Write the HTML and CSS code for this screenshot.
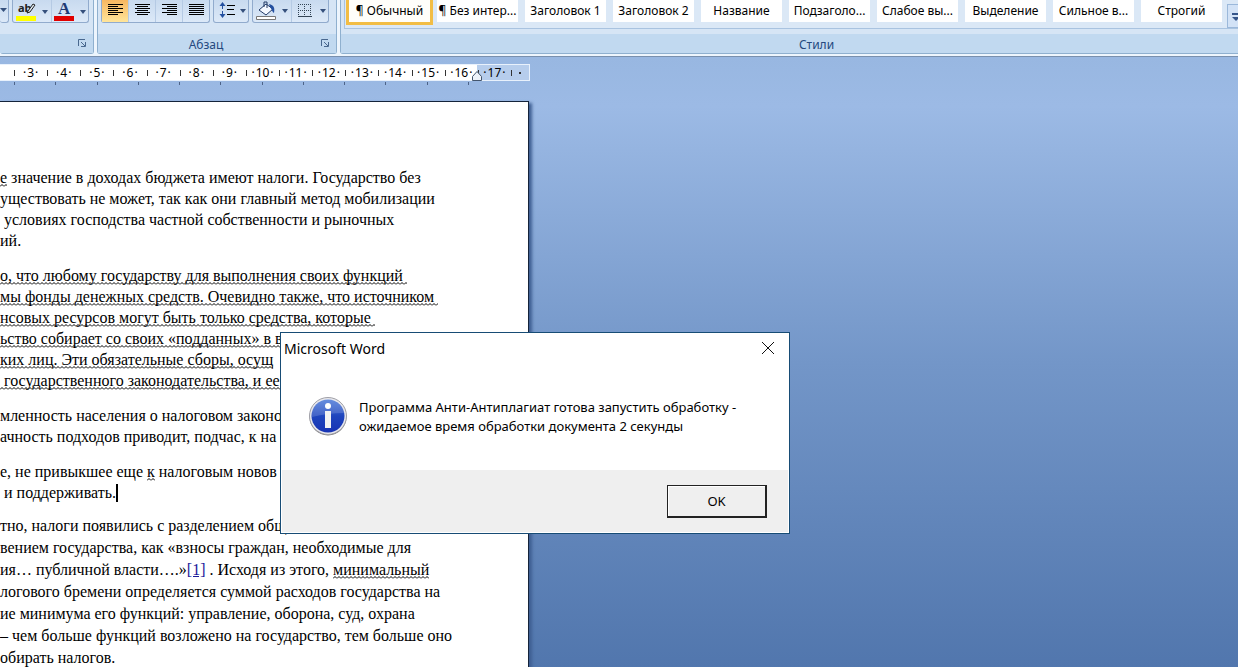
FILE: index.html
```html
<!DOCTYPE html>
<html lang="ru">
<head>
<meta charset="utf-8">
<title>Microsoft Word</title>
<link rel="stylesheet" href="styles.css">
</head>
<body>
<header class="ribbon">
  <section class="group group-font">
    <div class="group-body">
      <div class="tools tools-cut"><button class="tool drop" aria-label="Регистр"><svg width="7" height="4"><path d="M0 0h7L3.5 4z"/></svg></button></div>
      <div class="tools">
        <button class="tool" aria-label="Цвет выделения текста"><svg width="38" height="22" viewBox="0 0 38 22"><text x="5" y="12" class="ico-ab">ab</text><path d="M15 11l5-7 2 1-5 7-3 1z" fill="#dfe8ef" stroke="#222"/><path d="M3 16h20v5H3z" fill="#ff0"/><path class="arrow" d="M29 10h6l-3 4z"/></svg></button>
        <button class="tool" aria-label="Цвет текста"><svg width="36" height="22" viewBox="0 0 36 22"><text x="6" y="14" class="ico-a">A</text><path d="M2 16h20v5H2z" fill="#e00000"/><path class="arrow" d="M28 10h6l-3 4z"/></svg></button>
      </div>
    </div>
    <footer class="group-title"><button class="launcher" aria-label="Шрифт"><svg width="10" height="10"><path d="M1.500 8V1.500H8M4 4l4 4M8.500 4v4.500H4" fill="none" stroke="#49688f"/></svg></button></footer>
  </section>
  <section class="group group-par">
    <div class="group-body">
      <div class="tools">
        <button class="tool on" aria-label="По левому краю"><svg width="26" height="22"><path d="M6 4.500h15M6 6.500h10M6 8.500h15M6 10.500h10M6 12.500h15M6 14.500h10"/></svg></button>
        <button class="tool" aria-label="По центру"><svg width="26" height="22"><path d="M6 4.500h15M8 6.500h11M6 8.500h15M8 10.500h11M6 12.500h15M8 14.500h11"/></svg></button>
        <button class="tool" aria-label="По правому краю"><svg width="26" height="22"><path d="M6 4.500h15M11 6.500h10M6 8.500h15M11 10.500h10M6 12.500h15M11 14.500h10"/></svg></button>
        <button class="tool" aria-label="По ширине"><svg width="26" height="22"><path d="M6 4.500h15M6 6.500h15M6 8.500h15M6 10.500h15M6 12.500h15M6 14.500h15"/></svg></button>
      </div>
      <div class="tools">
        <button class="tool" aria-label="Междустрочный интервал"><svg width="34" height="22"><path d="M8.500 4v5M8.500 11v5" stroke="#2450a0"/><path d="M5.500 6l3-4 3 4zM5.500 14l3 4 3-4z" fill="#2450a0"/><path d="M13 5.500h8M13 9.500h7M13 14.500h8"/><path class="arrow" d="M26 9h6l-3 4z"/></svg></button>
      </div>
      <div class="tools">
        <button class="tool" aria-label="Заливка"><svg width="38" height="22"><path d="M6 10l7-6 7 5-7 6z" fill="#f4f8ff" stroke="#223a66"/><path d="M11 7V2h3v6" fill="none" stroke="#223a66"/><path d="M16 4c5 1 6 4 5 9-2-1-2-4-4-6z" fill="#2450a0"/><path d="M3.500 16.500h19v3h-19z" fill="#fff" stroke="#777"/><path class="arrow" d="M29 9h6l-3 4z"/></svg></button>
        <button class="tool" aria-label="Границы"><svg width="36" height="22"><path d="M6 4.500h14M6 10.500h14M6.500 4v12M12.500 4v12M18.500 4v12" stroke="#345" stroke-dasharray="1 1"/><path d="M6 16.500h14" stroke="#345"/><path class="arrow" d="M28 9h6l-3 4z"/></svg></button>
      </div>
    </div>
    <footer class="group-title with-launcher"><span>Абзац</span><button class="launcher" aria-label="Параметры абзаца"><svg width="10" height="10"><path d="M1.500 8V1.500H8M4 4l4 4M8.500 4v4.500H4" fill="none" stroke="#49688f"/></svg></button></footer>
  </section>
  <section class="group group-styles">
    <div class="group-body">
      <div class="gallery">
        <button class="style chosen">¶ Обычный</button>
        <button class="style">¶ Без интер...</button>
        <button class="style">Заголовок 1</button>
        <button class="style">Заголовок 2</button>
        <button class="style">Название</button>
        <button class="style">Подзаголо...</button>
        <button class="style">Слабое вы...</button>
        <button class="style">Выделение</button>
        <button class="style">Сильное в...</button>
        <button class="style">Строгий</button>
        <button class="more" aria-label="Дополнительно"><svg width="16" height="18"><path d="M4 6h8v2H4zM4 10h8l-4 4z" fill="#35558a"/></svg></button>
      </div>
    </div>
    <footer class="group-title"><span>Стили</span></footer>
  </section>
</header>
<main class="workspace">
  <div class="ruler">
    <div class="scale"><span>3</span><span>4</span><span>5</span><span>6</span><span>7</span><span>8</span><span>9</span><span>10</span><span>11</span><span>12</span><span>13</span><span>14</span><span>15</span><span>16</span><span>17</span></div>
    <div class="scale-end"></div>
    <svg class="marker" width="12" height="12"><path d="M1.500 10.500v-4l4.500-5 4.500 5v4z" fill="#eef3fa" stroke="#44566e"/></svg>
  </div>
  <div class="tabs"><i></i><i></i><i></i><i></i><i></i><i></i><i></i><i></i><i></i><i></i><i></i><i></i></div>
  <article class="page">
    <p><span class="wave">е</span> значение в доходах бюджета имеют налоги. Государство без<br>уществовать не может, так как они главный метод мобилизации<br>&nbsp;условиях господства частной собственности и рыночных<br>ий.</p>
    <p><span class="wave">о, что любому государству для выполнения своих функций&nbsp;</span><br><span class="wave">мы фонды денежных средств. Очевидно также, что источником&nbsp;</span><br><span class="wave">нсовых ресурсов могут быть только средства, которые&nbsp;</span><br><span class="wave">ьство собирает со своих «подданных» в в</span><br><span class="wave">ких лиц. Эти обязательные сборы, осущ</span><br><span class="wave">&nbsp;государственного законодательства, и ее</span></p>
    <p>мленность населения о налоговом законо<br>ачность подходов приводит, подчас, к на</p>
    <p>е, не привыкшее еще <span class="wave">к</span> налоговым новов<br>&nbsp;и поддерживать.<span class="caret"></span></p>
    <p class="last">тно, налоги появились с разделением общ<br>вением государства, как «взносы граждан, необходимые для<br>ия… публичной власти….»<a href="#note">[1]</a> . Исходя из этого, <span class="wave">минимальный</span><br>логового бремени определяется суммой расходов государства на<br>ие минимума его функций: управление, оборона, суд, охрана<br>– чем больше функций возложено на государство, тем больше оно<br>обирать налогов.</p>
  </article>
</main>
<div class="dialog" role="dialog" aria-labelledby="dialog-title">
  <div class="dialog-bar"><span id="dialog-title">Microsoft Word</span><button class="close" aria-label="Закрыть"><svg width="14" height="14"><path d="M1 1l12 12M13 1L1 13" stroke="#111"/></svg></button></div>
  <div class="dialog-body">
    <svg width="40" height="40" viewBox="0 0 40 40">
      <defs><linearGradient id="blue" x1="0" y1="0" x2="0" y2="1"><stop offset="0" stop-color="#4a78d8"/><stop offset=".5" stop-color="#1f45bd"/><stop offset="1" stop-color="#1733b4"/></linearGradient></defs>
      <circle cx="20" cy="21" r="18.500" fill="#777"/><circle cx="20" cy="20" r="18.500" fill="#e8e8ec" stroke="#a0a0a8"/><circle cx="20" cy="20" r="16.500" fill="url(#blue)"/>
      <path d="M4 21A16 16 0 0 1 36 17Q20 17 4 21z" fill="#fff" opacity=".16"/>
      <circle cx="20" cy="10" r="3" fill="#fff"/><path d="M17 15h6v17h-6z" fill="#f2f2f2"/>
    </svg>
    <p>Программа Анти-Антиплагиат готова запустить обработку -<br>ожидаемое время обработки документа 2 секунды</p>
  </div>
  <div class="dialog-foot"><button class="ok">OK</button></div>
</div>
</body>
</html>
```
FILE: styles.css
```css
* { box-sizing: border-box; }
body {
  margin: 0;
  min-height: 100vh;
  display: flex;
  flex-direction: column;
  overflow: hidden;
  font: 12px/18px "Noto Sans", "Open Sans", sans-serif;
  color: #000;
}
button { font: inherit; color: inherit; border: 0; padding: 0; background: none; }
svg { display: block; }

.ribbon {
  display: flex;
  gap: 3px;
  padding-bottom: 2px;
  background: #edf5fd;
  border-bottom: 1px solid #7990ae;
  overflow: hidden;
}
.group {
  border: 1px solid #8fb0cf;
  border-top: 0;
  border-radius: 0 0 3px 3px;
  background: #d6e5f5;
  flex: none;
}
.group-font { width: 94px; border-left: 0; }
.group-par { width: 240px; }
.group-styles { flex: 1; margin-right: -55px; }
.group-body { display: flex; gap: 3px; height: 34px; padding: 0 4px 0 3px; }
.group-font .group-body { padding-left: 0; }
.group-title {
  display: flex;
  align-items: center;
  justify-content: center;
  position: relative;
  height: 19px;
  padding-top: 2px;
  background: #c1d9f0;
  color: #25497f;
}
.with-launcher { padding-right: 22px; }
.launcher { position: absolute; right: 6px; top: 4px; }

.tools {
  display: flex;
  height: 23px;
  border: 1px solid #91abcd;
  border-top: 0;
  border-radius: 0 0 3px 3px;
  background: linear-gradient(#c8daef, #dce9f8);
}
.tools-cut { width: 10px; border-left: 0; }
.drop { padding: 0 0 2px; }
.tool + .tool { border-left: 1px solid #b5cae4; }
.tool svg { stroke: #000; stroke-width: 1; }
.tool text, .tool .arrow, .drop svg { stroke: none; fill: #35507c; }
.tool path[fill]:not([stroke]) { stroke: none; }
.tool .ico-ab { font: 700 11px "Noto Sans", sans-serif; fill: #222; }
.tool .ico-a { font: 700 17px "Liberation Serif", serif; fill: #1f3a75; }
.on { background: linear-gradient(#f7b760, #ffe59a); }

.gallery {
  display: flex;
  gap: 7px;
  width: 100%;
  height: 29px;
  padding-left: 4px;
  border: 1px solid #a9c3e0;
  border-top: 0;
  background: #dbe8f6;
}
.style {
  flex: none;
  width: 81px;
  height: 22px;
  background: #fff;
  white-space: nowrap;
}
.chosen { outline: 3px solid #f2bd45; background: #fffefa; }
.more {
  width: 18px;
  height: 24px;
  margin: 4px 0 0 -2px;
  border: 1px solid #9bb8da;
  background: #d2e2f6;
}

.workspace {
  flex: 1;
  padding-top: 7px;
  background: linear-gradient(#98b7e1, #9cbae5 8%, #7396c8 50%, #5176ad);
}
.ruler {
  display: flex;
  position: relative;
  width: 530px;
  height: 17px;
  padding-left: 14px;
  border: 1px solid #e8f1fc;
  border-left: 0;
  background: linear-gradient(90deg, #fff 477px, #b6cdec 477px);
}
.scale { flex: 1; display: grid; grid-template-columns: repeat(15, 1fr); }
.scale span {
  display: flex;
  align-items: center;
  justify-content: center;
  gap: 1px;
  line-height: 15px;
  background: linear-gradient(#333, #333) 0 5px / 1px 6px no-repeat;
}
.scale span::before, .scale span::after { content: "·"; }
.scale-end {
  width: 18px;
  background:
    linear-gradient(#333, #333) 0 5px / 1px 6px no-repeat,
    linear-gradient(#333, #333) 8px 7px / 2px 2px no-repeat;
}
.marker { position: absolute; left: 471px; top: 5px; }
.tabs { display: flex; justify-content: space-between; width: 469px; height: 20px; padding: 1px 0 0 14px; }
.tabs i { width: 1px; height: 3px; background: #4d6388; }

.page {
  width: 529px;
  min-height: 566px;
  padding-top: 65px;
  border: 1px solid #14233a;
  border-left: 0;
  border-bottom: 0;
  background: #fff;
  box-shadow: 3px 2px 3px #3f5f92;
  font: 16px/21px "Liberation Serif", serif;
  white-space: nowrap;
}
.page p { margin: 0 0 14px; }
.page .last { line-height: 22px; margin: -2px 0 0; }
.page a { color: #1a1a9a; }
.wave {
  padding-bottom: 1px;
  background: url("data:image/svg+xml,%3Csvg xmlns='http://www.w3.org/2000/svg' width='4' height='3'%3E%3Cpath d='M0 2.500L2 .5L4 2.500' fill='none' stroke='%23000'/%3E%3C/svg%3E") 0 100% repeat-x;
}
.caret { display: inline-block; width: 2px; height: 18px; background: #000; vertical-align: -4px; }

.dialog {
  position: absolute;
  left: 280px;
  top: 332px;
  width: 510px;
  border: 1px solid #174c75;
  background: #fff;
  font-size: 13px;
  line-height: 19px;
}
.dialog-bar { display: flex; justify-content: space-between; height: 30px; padding: 6px 14px 0 3px; font-size: 14px; }
.close { height: 20px; padding-bottom: 2px; }
.dialog-body { display: flex; gap: 11px; height: 107px; padding: 33px 27px 0; }
.dialog-body p { margin: 2px 0 0; white-space: nowrap; }
.dialog-foot {
  display: flex;
  justify-content: flex-end;
  height: 62px;
  padding: 15px 21px 0 0;
  margin: 0 1px 1px;
  background: #efefef;
}
.ok {
  width: 100px;
  height: 33px;
  border: 1px solid #222;
  border-right-width: 2px;
  border-bottom-width: 2px;
  box-shadow: inset 1px 1px #fff;
}
```
